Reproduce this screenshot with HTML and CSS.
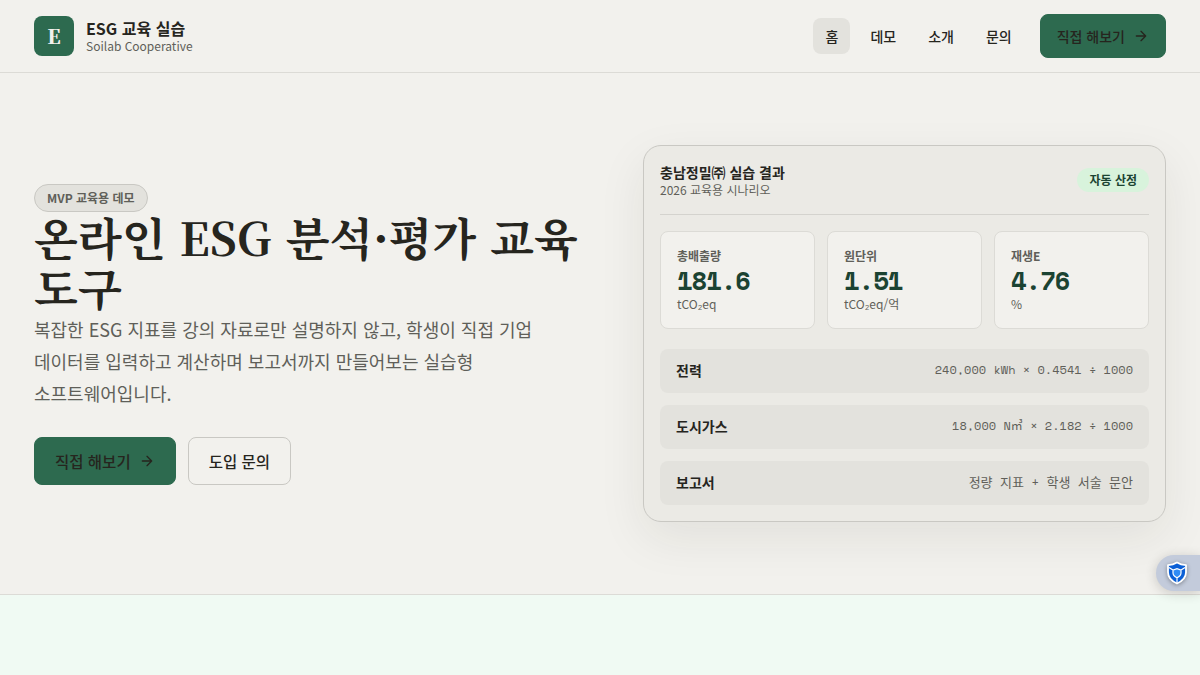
FILE: index.html
```html
<!DOCTYPE html>
<html lang="ko">

<head>
  <meta charset="UTF-8">
  <title>ESG 교육 실습</title>
  <link rel="stylesheet" href="styles.css">
</head>

<body>
  <header class="header">
    <a class="brand" href="#">
      <span class="brand-mark">E</span>
      <span class="brand-text">
        <strong>ESG 교육 실습</strong>
        <small>Soilab Cooperative</small>
      </span>
    </a>
    <nav class="nav">
      <a class="nav-link active" href="#">홈</a>
      <a class="nav-link" href="#">데모</a>
      <a class="nav-link" href="#">소개</a>
      <a class="nav-link" href="#">문의</a>
      <a class="button button-primary button-small" href="#">직접 해보기
        <svg class="arrow" viewBox="0 0 24 24"><path d="M5 12h14M12 5l7 7-7 7"/></svg>
      </a>
    </nav>
  </header>

  <section class="hero">
    <div class="hero-copy">
      <span class="badge">MVP 교육용 데모</span>
      <h1>온라인 ESG 분석·평가 교육<br>도구</h1>
      <p>복잡한 ESG 지표를 강의 자료로만 설명하지 않고, 학생이 직접 기업<br>데이터를 입력하고 계산하며 보고서까지 만들어보는 실습형<br>소프트웨어입니다.</p>
      <div class="actions">
        <a class="button button-primary" href="#">직접 해보기
          <svg class="arrow" viewBox="0 0 24 24"><path d="M5 12h14M12 5l7 7-7 7"/></svg>
        </a>
        <a class="button button-outline" href="#">도입 문의</a>
      </div>
    </div>

    <div class="card">
      <div class="card-head">
        <div class="card-title">
          <strong>충남정밀㈜ 실습 결과</strong>
          <span>2026 교육용 시나리오</span>
        </div>
        <span class="status">자동 산정</span>
      </div>
      <div class="metrics">
        <div class="metric">
          <span class="metric-label">총배출량</span>
          <strong>181.6</strong>
          <small>tCO₂eq</small>
        </div>
        <div class="metric">
          <span class="metric-label">원단위</span>
          <strong>1.51</strong>
          <small>tCO₂eq/억</small>
        </div>
        <div class="metric">
          <span class="metric-label">재생E</span>
          <strong>4.76</strong>
          <small>%</small>
        </div>
      </div>
      <div class="rows">
        <div class="row"><strong>전력</strong><span>240,000 kWh × 0.4541 ÷ 1000</span></div>
        <div class="row"><strong>도시가스</strong><span>18,000 N㎥ × 2.182 ÷ 1000</span></div>
        <div class="row"><strong>보고서</strong><span class="hangul">정량 지표 + 학생 서술 문안</span></div>
      </div>
    </div>
  </section>

  <section class="next-section"></section>

  <div class="side-tab">
    <svg viewBox="0 0 22 24">
      <path d="M11 1.5C8.2 3.2 5 4 2 4.2v7c0 5 3.5 8.8 9 11.3 5.5-2.5 9-6.3 9-11.3v-7C17 4 13.8 3.2 11 1.5z" fill="#0b5fd6" stroke="#fff" stroke-width="1.8" stroke-linejoin="round"/>
      <path d="M7 9l4-1.3L15 9v3c0 2-1.5 3.5-4 4.7C8.500 15.500 7 14 7 12z" fill="#2f8bf5"/>
      <path d="M3 6.5L7 9l4-1.3L15 9l4-2.5M7 9v3c0 2 1.5 3.5 4 4.7 2.5-1.200 4-2.700 4-4.700V9M11 16.7V22" fill="none" stroke="#fff" stroke-width="1.2"/>
    </svg>
  </div>
</body>

</html>
```
FILE: styles.css
```css
* {
  box-sizing: border-box;
}

body {
  margin: 0;
  height: 675px;
  overflow: hidden;
  background: #f2f1ed;
  color: #26251e;
  font-family: "Noto Sans CJK KR", sans-serif;
  font-size: 16px;
}

a {
  color: inherit;
  text-decoration: none;
}

.header {
  display: flex;
  align-items: center;
  justify-content: space-between;
  height: 73px;
  padding: 0 34px;
  border-bottom: 1px solid #dcdbd6;
}

.brand {
  display: flex;
  align-items: center;
  gap: 12px;
}

.brand-mark {
  display: grid;
  place-items: center;
  width: 40px;
  height: 40px;
  padding-bottom: 1px;
  border-radius: 8px;
  background: #2d6a4f;
  color: #f2f1ed;
  font-family: "Noto Serif KR", "Liberation Serif", serif;
  font-size: 20px;
  font-weight: 900;
}

.brand-text {
  display: grid;
}

.brand-text strong {
  font-size: 16px;
  line-height: 18px;
}

.brand-text small {
  color: #605f59;
  font-size: 12px;
  line-height: 17px;
}

.nav {
  display: flex;
  align-items: center;
  gap: 8px;
  font-size: 14px;
  font-weight: 500;
}

.nav-link {
  height: 36px;
  padding: 0 12px;
  border-radius: 8px;
  line-height: 36px;
}

.nav-link.active {
  background: #e3e2dd;
}

.button {
  display: inline-flex;
  align-items: center;
  gap: 8px;
  height: 48px;
  padding: 0 20px;
  border: 1px solid transparent;
  border-radius: 8px;
  font-size: 15.5px;
  font-weight: 500;
}

.button-primary {
  background: #2d6a4f;
  border-color: #2d6a4f;
}

.button-outline {
  border-color: #c9c8c3;
}

.button-small {
  height: 44px;
  margin-left: 8px;
  padding: 0 16px;
  font-size: 14px;
}

.arrow {
  width: 16px;
  height: 16px;
  fill: none;
  stroke: currentColor;
  stroke-width: 2;
  stroke-linecap: round;
  stroke-linejoin: round;
}

.hero {
  display: grid;
  grid-template-columns: minmax(0, 1fr) 523px;
  gap: 48px;
  align-items: center;
  height: 522px;
  padding: 0 34px;
  border-bottom: 1px solid #dcdbd6;
}

.hero-copy {
  padding-top: 2px;
}

.badge {
  display: block;
  width: max-content;
  height: 28px;
  padding: 0 12px;
  border: 1px solid #c9c8c3;
  border-radius: 14px;
  background: #e3e2dd;
  color: #605f59;
  font-size: 12px;
  font-weight: 700;
  line-height: 26px;
}

h1 {
  margin: 0 0 1px;
  font-family: "Noto Serif KR", "Noto Serif CJK KR", "Noto Sans CJK KR", serif;
  font-size: 45.4px;
  font-weight: 700;
  line-height: 50px;
  white-space: nowrap;
}

.hero p {
  margin: 0 0 28px;
  color: #605f59;
  font-size: 18px;
  line-height: 32px;
  white-space: nowrap;
}

.actions {
  display: flex;
  gap: 12px;
}

.card {
  height: 377px;
  padding: 16px;
  border: 1px solid #c9c8c3;
  border-radius: 18px;
  background: #ebeae5;
  box-shadow: 0 16px 48px rgba(38, 37, 30, 0.08);
}

.card-head {
  display: flex;
  align-items: center;
  justify-content: space-between;
  height: 53px;
  padding-bottom: 16px;
  border-bottom: 1px solid #d4d3ce;
}

.card-title {
  display: grid;
}

.card-title strong {
  font-size: 14px;
  line-height: 20px;
}

.card-title span {
  color: #605f59;
  font-size: 12px;
  line-height: 16px;
}

.status {
  height: 24px;
  padding: 0 12px;
  border-radius: 12px;
  background: #d8f3dc;
  color: #1b4332;
  font-size: 12px;
  font-weight: 700;
  line-height: 24px;
}

.metrics {
  display: grid;
  grid-template-columns: repeat(3, 1fr);
  gap: 12px;
  margin: 16px 0 20px;
}

.metric {
  display: grid;
  grid-template-rows: 16px 30px 18px;
  height: 98px;
  padding: 16px;
  border: 1px solid #dcdbd6;
  border-radius: 8px;
  background: #f2f1ed;
}

.metric-label {
  color: #605f59;
  font-size: 12px;
  font-weight: 700;
  line-height: 16px;
}

.metric strong {
  color: #1b4332;
  font-family: "Space Mono", "Liberation Mono", monospace;
  font-size: 25.6px;
  letter-spacing: -1.1px;
  line-height: 32px;
}

.metric small {
  color: #605f59;
  font-size: 12px;
  line-height: 20px;
}

.rows {
  display: grid;
  gap: 12px;
}

.row {
  display: flex;
  align-items: center;
  justify-content: space-between;
  height: 44px;
  padding: 0 16px 2px;
  border-radius: 8px;
  background: #e3e2dd;
}

.row strong {
  font-size: 14px;
}

.row span {
  color: #605f59;
  font-family: "Space Mono", "Liberation Mono", "Noto Sans CJK KR", monospace;
  font-size: 12px;
  line-height: 20px;
}

.row .hangul {
  font-size: 13px;
  word-spacing: -0.6px;
}

.next-section {
  height: 80px;
  background: #f0faf3;
}

/* floating tab on the right edge */
.side-tab {
  position: absolute;
  top: 555px;
  right: 0;
  display: flex;
  align-items: center;
  width: 44px;
  height: 36px;
  padding-left: 10px;
  border-radius: 18px 0 0 18px;
  background: #c3cbdb;
  box-shadow: 0 2px 12px rgba(38, 37, 30, 0.2);
}

.side-tab svg {
  width: 22px;
  height: 24px;
  filter: drop-shadow(0 1px 2px rgba(0, 0, 0, 0.35));
}
```
